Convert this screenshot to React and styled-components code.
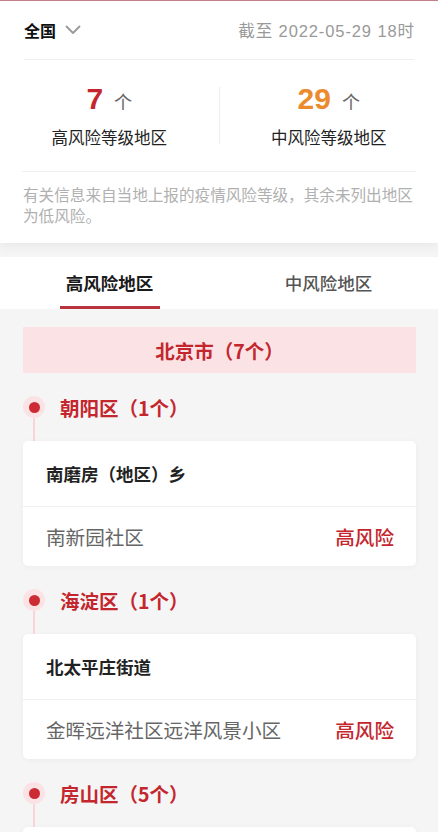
import React, { useState } from 'react'
import styled, { createGlobalStyle } from 'styled-components'

const GlobalStyle = createGlobalStyle`
  html, body {
    margin: 0;
    padding: 0;
    background: #f5f5f5;
    font-family: "Noto Sans CJK SC", "Noto Sans", "Liberation Sans", sans-serif;
    -webkit-font-smoothing: antialiased;
  }
  * { box-sizing: border-box; }
`

const RED = '#c4262e'

const Page = styled.div`
  width: 438px;
  height: 832px;
  overflow: hidden;
  background: #f5f5f5;
  border-top: 1px solid #c27f88;
`

const Summary = styled.section`
  background: #fff;
  box-shadow: 0 3px 10px rgba(0, 0, 0, 0.06);
`

const TopBar = styled.div`
  display: flex;
  align-items: center;
  justify-content: space-between;
  height: 59px;
  margin: 0 24px;
  border-bottom: 1px solid #eeeeee;
`

const Region = styled.div`
  display: flex;
  align-items: center;
  gap: 9px;
  font-size: 16px;
  font-weight: 700;
  color: #111;
`

const Stamp = styled.div`
  font-family: "Liberation Sans", "Noto Sans CJK SC", sans-serif;
  font-size: 16.5px;
  color: #999;
  letter-spacing: 0.9px;
  margin-right: -1px;
`

const Stats = styled.div`
  display: grid;
  grid-template-columns: 1fr 1px 1fr;
  align-items: center;
  height: 112px;
  margin: 0 22px;
  border-bottom: 1px solid #eeeeee;
`

const Stat = styled.div`
  display: flex;
  flex-direction: column;
  align-items: center;
  gap: 9px;
  margin: ${p => (p.$right ? '0 -22px 0 0' : '0 0 0 -22px')};
`

const Count = styled.div`
  display: flex;
  align-items: baseline;
  gap: 11px;
`

const Num = styled.span`
  font-family: "Liberation Sans", "Noto Sans", sans-serif;
  font-size: 30px;
  font-weight: 700;
  line-height: 34px;
  color: ${p => p.$color};
`

const Unit = styled.span`
  font-size: 18px;
  color: #666;
`

const StatLabel = styled.div`
  font-size: 16.5px;
  color: #222;
  line-height: 24px;
`

const VDivider = styled.div`
  width: 1px;
  height: 57px;
  background: #eeeeee;
`

const Note = styled.p`
  margin: 0;
  padding: 12px 22px 17px 23px;
  font-size: 15.6px;
  line-height: 21px;
  color: #b0b0b0;
`

const Tabs = styled.nav`
  display: grid;
  grid-template-columns: 1fr 1fr;
  height: 52px;
  margin-top: 14px;
  background: #fff;
`

const Tab = styled.button`
  position: relative;
  border: 0;
  background: none;
  padding: 0 0 2px;
  font-family: inherit;
  font-size: 17.5px;
  font-weight: ${p => (p.$active ? 600 : 500)};
  color: ${p => (p.$active ? '#1a1a1a' : '#555')};
  cursor: pointer;
  &::after {
    content: '';
    display: ${p => (p.$active ? 'block' : 'none')};
    position: absolute;
    left: 50%;
    bottom: 0;
    width: 100px;
    height: 3px;
    margin-left: -50px;
    background: #b8333b;
  }
`

const List = styled.div`
  padding: 18px 22px 0 23px;
`

const Province = styled.div`
  display: flex;
  align-items: center;
  justify-content: center;
  height: 46px;
  background: #fbe2e4;
  color: ${RED};
  font-size: 19.5px;
  font-weight: 700;
`

const District = styled.div`
  position: relative;
  display: flex;
  align-items: center;
  height: 68px;
  padding-left: 37px;
  color: ${RED};
  font-size: 19.5px;
  font-weight: 700;
  &::before {
    content: '';
    position: absolute;
    left: 10px;
    top: 34px;
    width: 2px;
    height: 34px;
    background: #f7d5d8;
  }
`

const Dot = styled.span`
  position: absolute;
  left: 0;
  top: 23px;
  width: 22px;
  height: 22px;
  border-radius: 50%;
  background: #fbe3e5;
  display: flex;
  align-items: center;
  justify-content: center;
  &::after {
    content: '';
    width: 11px;
    height: 11px;
    border-radius: 50%;
    background: #cc2b34;
  }
`

const Card = styled.div`
  background: #fff;
  border-radius: 5px;
  box-shadow: 0 1px 6px rgba(0, 0, 0, 0.04);
`

const Street = styled.div`
  display: flex;
  align-items: center;
  height: 66px;
  padding: 0 23px;
  border-bottom: 1px solid #f0f0f0;
  font-size: 17.5px;
  font-weight: 700;
  color: #222;
`

const Row = styled.div`
  display: flex;
  align-items: center;
  justify-content: space-between;
  height: 59px;
  padding: 0 22px 0 23px;
`

const Place = styled.span`
  font-size: 19.6px;
  color: #666;
`

const Level = styled.span`
  font-size: 19.6px;
  font-weight: 500;
  color: ${RED};
`

const Chevron = () => (
  <svg width="16" height="10" viewBox="0 0 16 10" fill="none">
    <path d="M1.5 1.5 L8 8 L14.5 1.5" stroke="#999" strokeWidth="1.8" strokeLinecap="round" strokeLinejoin="round" />
  </svg>
)

const districts = [
  { name: '朝阳区', count: 1, street: '南磨房（地区）乡', places: ['南新园社区'] },
  { name: '海淀区', count: 1, street: '北太平庄街道', places: ['金晖远洋社区远洋风景小区'] },
  { name: '房山区', count: 5, street: '', places: [] }
]

export default function App() {
  const [tab, setTab] = useState(0)
  return (
    <Page>
      <GlobalStyle />
      <Summary>
        <TopBar>
          <Region>全国 <Chevron /></Region>
          <Stamp>截至 2022-05-29 18时</Stamp>
        </TopBar>
        <Stats>
          <Stat>
            <Count><Num $color="#c4262e">7</Num><Unit>个</Unit></Count>
            <StatLabel>高风险等级地区</StatLabel>
          </Stat>
          <VDivider />
          <Stat $right>
            <Count><Num $color="#ec8b2e">29</Num><Unit>个</Unit></Count>
            <StatLabel>中风险等级地区</StatLabel>
          </Stat>
        </Stats>
        <Note>有关信息来自当地上报的疫情风险等级，其余未列出地区为低风险。</Note>
      </Summary>
      <Tabs>
        <Tab $active={tab === 0} onClick={() => setTab(0)}>高风险地区</Tab>
        <Tab $active={tab === 1} onClick={() => setTab(1)}>中风险地区</Tab>
      </Tabs>
      <List>
        <Province>北京市（7个）</Province>
        {districts.map(d => (
          <div key={d.name}>
            <District><Dot />{d.name}（{d.count}个）</District>
            <Card>
              {d.street && <Street>{d.street}</Street>}
              {d.places.map(p => (
                <Row key={p}>
                  <Place>{p}</Place>
                  <Level>高风险</Level>
                </Row>
              ))}
              {!d.street && <Street />}
            </Card>
          </div>
        ))}
      </List>
    </Page>
  )
}
